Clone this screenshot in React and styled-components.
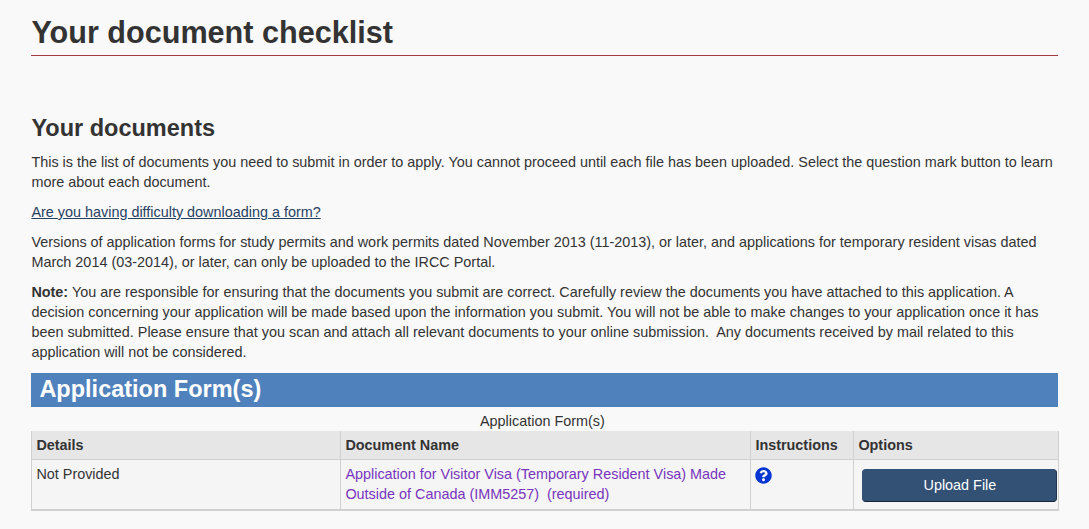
import React from 'react';
import styled, { createGlobalStyle } from 'styled-components';
import { FaQuestionCircle } from 'react-icons/fa';

const GlobalStyle = createGlobalStyle`
  html, body {
    margin: 0;
    padding: 0;
    background: #f9f9f9;
  }
  body {
    font-family: "Liberation Sans", Arial, sans-serif;
    font-size: 14.4px;
    line-height: 20px;
    color: #333;
    overflow: hidden;
  }
`;

const Page = styled.main`
  width: 1026.6px;
  margin-left: 31.4px;
  height: 529px;
`;

const PageTitle = styled.h1`
  margin: 0;
  padding-top: 11px;
  height: 44px;
  font-size: 30.6px;
  line-height: 42px;
  font-weight: 700;
  color: #333;
  border-bottom: 1px solid #a63a3f;
`;

const SectionTitle = styled.h2`
  margin: 0;
  padding-top: 58px;
  font-size: 23.5px;
  line-height: 28px;
  font-weight: 700;
  color: #333;
`;

const Paragraph = styled.p`
  margin: 10px 0 0;
`;

const HelpLink = styled.a`
  color: #284162;
  text-decoration: underline;
`;

const BlueBar = styled.h3`
  margin: 11px 0 0;
  height: 34px;
  padding-left: 8px;
  background: #4f81bd;
  color: #fff;
  font-size: 23.5px;
  line-height: 33px;
  font-weight: 700;
`;

const Table = styled.table`
  width: 100%;
  table-layout: fixed;
  border-collapse: collapse;
`;

const Caption = styled.caption`
  height: 24px;
  padding-right: 6px;
  line-height: 29px;
  text-align: center;
`;

const HeadCell = styled.th`
  box-sizing: border-box;
  width: ${(p) => p.$width}px;
  height: 28px;
  padding: 0 4px;
  background: #e6e6e6;
  border: 1px solid #d0d0d0;
  border-top: 0;
  text-align: left;
  font-weight: 700;
`;

const Cell = styled.td`
  box-sizing: border-box;
  height: 50px;
  padding: 4px 4px 5px;
  background: #f5f5f5;
  border: 1px solid #d0d0d0;
  border-bottom-width: 2px;
  vertical-align: top;
`;

const DocLink = styled.a`
  color: #7834bc;
  text-decoration: none;
`;

const HelpIcon = styled(FaQuestionCircle)`
  display: block;
  margin-top: 3px;
  color: #0535d2;
  font-size: 17px;
`;

const OptionsCell = styled(Cell)`
  padding: 0 0 0 8px;
`;

const UploadButton = styled.button`
  display: block;
  width: 195px;
  height: 33px;
  margin-top: 9px;
  background: #335075;
  border: 1px solid #335075;
  border-right-color: #22344d;
  border-bottom-color: #16243a;
  border-radius: 4px;
  color: #fff;
  font-family: inherit;
  font-size: 14.4px;
`;

const columns = [
  { label: 'Details', width: 309 },
  { label: 'Document Name', width: 410 },
  { label: 'Instructions', width: 103 },
  { label: 'Options', width: 205 },
];

export default function App() {
  return (
    <Page>
      <GlobalStyle />
      <PageTitle>Your document checklist</PageTitle>
      <SectionTitle>Your documents</SectionTitle>
      <Paragraph>
        This is the list of documents you need to submit in order to apply. You cannot proceed until each file has been uploaded. Select the question mark button to learn more about each document.
      </Paragraph>
      <Paragraph>
        <HelpLink href="#">Are you having difficulty downloading a form?</HelpLink>
      </Paragraph>
      <Paragraph>
        Versions of application forms for study permits and work permits dated November 2013 (11-2013), or later, and applications for temporary resident visas dated March 2014 (03-2014), or later, can only be uploaded to the IRCC Portal.
      </Paragraph>
      <Paragraph>
        <strong>Note:</strong> You are responsible for ensuring that the documents you submit are correct. Carefully review the documents you have attached to this application. A decision concerning your application will be made based upon the information you submit. You will not be able to make changes to your application once it has been submitted. Please ensure that you scan and attach all relevant documents to your online submission.&nbsp; Any documents received by mail related to this application will not be considered.
      </Paragraph>
      <BlueBar>Application Form(s)</BlueBar>
      <Table>
        <Caption>Application Form(s)</Caption>
        <thead>
          <tr>
            {columns.map((col) => (
              <HeadCell key={col.label} $width={col.width}>{col.label}</HeadCell>
            ))}
          </tr>
        </thead>
        <tbody>
          <tr>
            <Cell>Not Provided</Cell>
            <Cell>
              <DocLink href="#">Application for Visitor Visa (Temporary Resident Visa) Made Outside of Canada (IMM5257)&nbsp; (required)</DocLink>
            </Cell>
            <Cell><HelpIcon /></Cell>
            <OptionsCell><UploadButton>Upload File</UploadButton></OptionsCell>
          </tr>
        </tbody>
      </Table>
    </Page>
  );
}
